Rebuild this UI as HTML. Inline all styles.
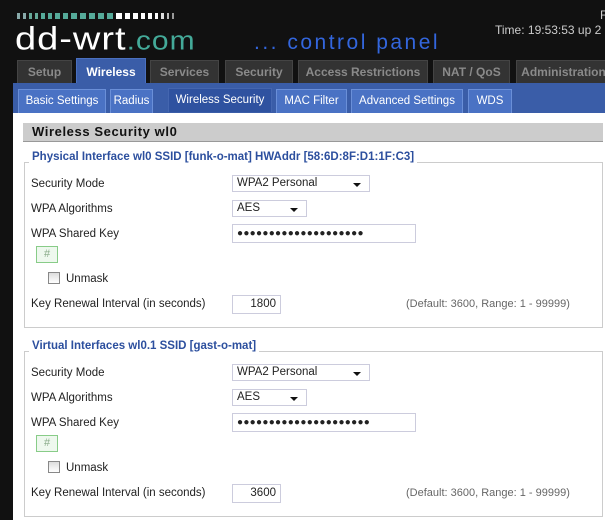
<!DOCTYPE html>
<html><head><meta charset="utf-8"><style>
*{margin:0;padding:0;box-sizing:border-box}
body{width:605px;height:520px;overflow:hidden;background:#111;font-family:"Liberation Sans",sans-serif;font-size:11px;color:#222;position:relative}
.a{position:absolute;white-space:nowrap}
.bars{position:absolute;left:17px;top:13px;height:6px;display:flex;gap:3px}
.bars i{display:block;width:3px;height:6px}
.tab{position:absolute;top:60px;height:23px;background:#333;border:1px solid #444;border-bottom:none;color:#8a8a8a;font-weight:bold;font-size:12px;text-align:center;line-height:22px}
.stab{position:absolute;top:89px;height:24px;background:#4a72c4;border:1px solid #6a8fd8;border-bottom:none;color:#fff;font-size:11.5px;text-align:center;line-height:23px}
.fs{position:absolute;left:24px;width:579px;border:1px solid #ccc}
.lg{position:absolute;left:29px;background:#fff;padding:0 3px;color:#2c4f9e;font-weight:bold;font-size:11.5px}
.lb{position:absolute;left:31px;font-size:11.5px}
.sel,.inp{position:absolute;left:232px;height:17px;border:1px solid #ccd;background:#fff;font-size:11.5px;padding-left:4px;line-height:15px}
.sel:after{content:"";position:absolute;right:8px;top:7px;border-left:4px solid transparent;border-right:4px solid transparent;border-top:4px solid #111}
.btn{position:absolute;left:36px;width:22px;height:17px;border:1px solid #8c8;background:#eef8ee;color:#8a8;text-align:center;line-height:15px;font-size:11px}
.cb{position:absolute;left:48px;width:12px;height:12px;border:1px solid #888;background:linear-gradient(#ddd,#fff)}
.def{position:absolute;left:406px;color:#666;font-size:11px}
</style></head><body>
<div class="bars">
<i style="background:#8aa"></i><i style="background:#8aa"></i><i style="background:#6a9"></i><i style="background:#6a9"></i><i style="background:#5a9;width:4px"></i><i style="background:#5a9;width:4px"></i><i style="background:#5a9;width:5px"></i><i style="background:#5a9;width:5px"></i><i style="background:#5a9;width:6px"></i><i style="background:#5a9;width:6px"></i><i style="background:#5a9;width:6px"></i><i style="background:#5a9;width:6px"></i><i style="background:#5a9;width:6px"></i><i style="background:#fff;width:6px"></i><i style="background:#fff;width:5px"></i><i style="background:#fff;width:5px"></i><i style="background:#fff;width:4px"></i><i style="background:#fff;width:4px"></i><i style="background:#fff"></i><i style="background:#ddd"></i><i style="background:#bbb;width:2px"></i><i style="background:#999;width:2px"></i>
</div>
<div class="a" style="left:15px;top:16px;font-size:38px;color:#fff;letter-spacing:1px;transform:scaleY(0.85);transform-origin:0 100%;line-height:40px">dd-wrt<span style="color:#4a9;font-size:30px;letter-spacing:1px">.com</span></div>
<div class="a" style="left:254px;top:31px;font-size:21px;color:#3366dd;letter-spacing:2.5px">... control panel</div>
<div class="a" style="left:600px;top:8px;color:#ccc;font-size:12px">F</div>
<div class="a" style="left:495px;top:23px;color:#ccc;font-size:12px">Time: 19:53:53 up 2 da</div>

<div class="tab" style="left:17px;width:55px">Setup</div>
<div class="tab" style="left:76px;width:70px;top:58px;height:26px;background:#3a5da8;border-color:#4a70c0;color:#fff;line-height:26px">Wireless</div>
<div class="tab" style="left:150px;width:69px">Services</div>
<div class="tab" style="left:225px;width:68px">Security</div>
<div class="tab" style="left:298px;width:130px">Access Restrictions</div>
<div class="tab" style="left:433px;width:77px">NAT / QoS</div>
<div class="tab" style="left:516px;width:95px">Administration</div>

<div class="a" style="left:13px;top:83px;width:592px;height:30px;background:#3a5da8"></div>
<div class="stab" style="left:18px;width:88px">Basic Settings</div>
<div class="stab" style="left:110px;width:43px">Radius</div>
<div class="stab" style="left:168px;width:104px;background:#2f52a0;border-color:#4466b0;top:88px">Wireless Security</div>
<div class="stab" style="left:276px;width:71px">MAC Filter</div>
<div class="stab" style="left:351px;width:112px">Advanced Settings</div>
<div class="stab" style="left:468px;width:44px">WDS</div>

<div class="a" style="left:13px;top:113px;width:592px;height:407px;background:#fff"></div>
<div class="a" style="left:23px;top:123px;width:580px;height:19px;background:#ccc;border-bottom:1px solid #999;font-weight:bold;font-size:13px;padding-left:9px;line-height:18px;color:#111;letter-spacing:0.6px">Wireless Security wl0</div>

<div class="fs" style="top:162px;height:166px"></div>
<div class="lg" style="top:151px">Physical Interface wl0 SSID [funk-o-mat] HWAddr [58:6D:8F:D1:1F:C3]</div>
<div class="lb" style="top:178px">Security Mode</div>
<div class="sel" style="top:175px;width:138px">WPA2 Personal</div>
<div class="lb" style="top:203px">WPA Algorithms</div>
<div class="sel" style="top:200px;width:75px">AES</div>
<div class="lb" style="top:228px">WPA Shared Key</div>
<div class="inp" style="top:224px;width:184px;height:19px;font-size:10px;letter-spacing:0.3px;line-height:17px">●●●●●●●●●●●●●●●●●●●●</div>
<div class="btn" style="top:246px">#</div>
<div class="cb" style="top:272px"></div>
<div class="a" style="left:66px;top:273px;font-size:11.5px">Unmask</div>
<div class="lb" style="top:298px">Key Renewal Interval (in seconds)</div>
<div class="inp" style="top:295px;width:49px;height:19px;text-align:right;padding-right:4px;line-height:17px">1800</div>
<div class="def" style="top:298px">(Default: 3600, Range: 1 - 99999)</div>

<div class="fs" style="top:351px;height:166px"></div>
<div class="lg" style="top:340px">Virtual Interfaces wl0.1 SSID [gast-o-mat]</div>
<div class="lb" style="top:367px">Security Mode</div>
<div class="sel" style="top:364px;width:138px">WPA2 Personal</div>
<div class="lb" style="top:392px">WPA Algorithms</div>
<div class="sel" style="top:389px;width:75px">AES</div>
<div class="lb" style="top:417px">WPA Shared Key</div>
<div class="inp" style="top:413px;width:184px;height:19px;font-size:10px;letter-spacing:0.3px;line-height:17px">●●●●●●●●●●●●●●●●●●●●●</div>
<div class="btn" style="top:435px">#</div>
<div class="cb" style="top:461px"></div>
<div class="a" style="left:66px;top:462px;font-size:11.5px">Unmask</div>
<div class="lb" style="top:487px">Key Renewal Interval (in seconds)</div>
<div class="inp" style="top:484px;width:49px;height:19px;text-align:right;padding-right:4px;line-height:17px">3600</div>
<div class="def" style="top:487px">(Default: 3600, Range: 1 - 99999)</div>
</body></html>
